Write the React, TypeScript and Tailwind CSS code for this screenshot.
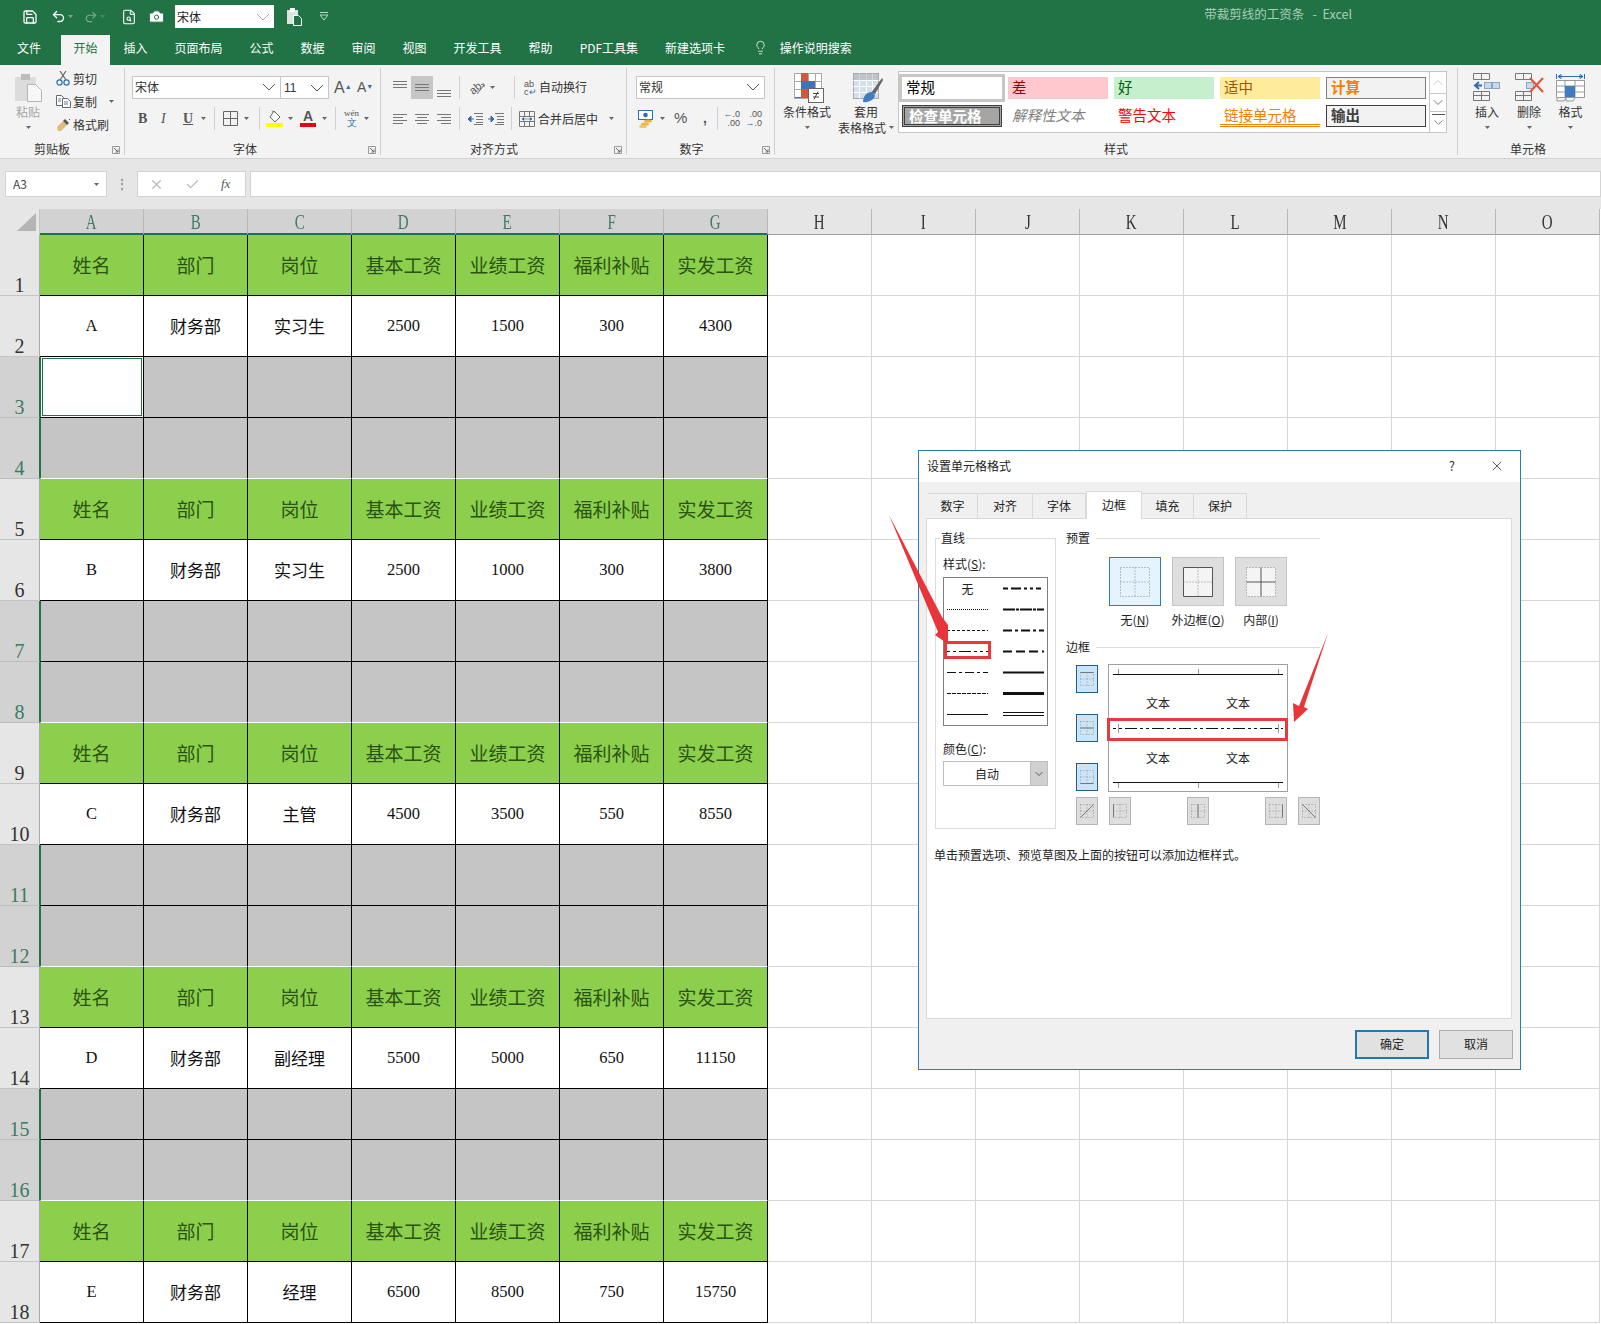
import React from 'react';
import { Save, Undo2, Redo2, FileSearch, Camera, Lightbulb, X, Check, ChevronDown, ChevronUp } from 'lucide-react';

const Caret = ({ className = '' }: { className?: string }) => (
  <svg width="5" height="3" viewBox="0 0 5 3" className={`shrink-0 ${className}`}><path d="M0 0h5L2.5 3z" fill="#666" /></svg>
);

const Sep = ({ className = '' }: { className?: string }) => <div className={`w-px h-[23px] bg-[#d0d0d0] shrink-0 ${className}`} />;

const Chev = ({ w = 14, className = '' }: { w?: number; className?: string }) => (
  <svg width={w} height="8" viewBox="0 0 14 8" className={`shrink-0 ${className}`}><path d="M1 1l6 6 6-6" fill="none" stroke="#555" /></svg>
);

const Launcher = () => (
  <svg width="8" height="8" viewBox="0 0 8 8" className="absolute right-[4px] bottom-[1px]"><path d="M.5 7.5v-7h7v7z" fill="none" stroke="#999" /><path d="M2 2l4 4M6 3.5V6H3.5" fill="none" stroke="#666" /></svg>
);

const Group = ({ w, label, launcher, labelPad = '', children }: { w: string; label: string; launcher?: boolean; labelPad?: string; children: React.ReactNode }) => (
  <div className={`${w} mt-[3px] h-[87px] border-r border-[#cfcfcf] relative shrink-0`}>
    <div className="h-[73px] pt-[8px]">{children}</div>
    <div className={`h-[16px] leading-[16px] text-center text-[12px] text-[#333] ${labelPad}`}>{label}</div>
    {launcher && <Launcher />}
  </div>
);

const Lines = ({ ys, x1, x2, w = 14 }: { ys: number[]; x1: number[]; x2: number[]; w?: number }) => (
  <svg width={w} height="12" viewBox={`0 0 ${w} 12`} className="shrink-0">
    {ys.map((y, i) => <path key={i} d={`M${x1[i]} ${y + 0.5}H${x2[i]}`} stroke="#777" />)}
  </svg>
);

const PasteIcon = () => (
  <svg width="29" height="29" viewBox="0 0 29 29">
    <rect x="1" y="4" width="21" height="24" fill="#dcdcdc" />
    <rect x="7" y="1" width="9" height="6" fill="#bdbdbd" />
    <path d="M13.5 11.5h8l6 6v11h-14z" fill="#f7f7f7" stroke="#b5b5b5" />
  </svg>
);
const CutIcon = () => (
  <svg width="14" height="15" viewBox="0 0 14 15">
    <path d="M4 9L10 0M10 9L4 0" stroke="#666" strokeWidth="1.2" />
    <circle cx="3.5" cy="11.5" r="2.6" fill="none" stroke="#2f6fb0" strokeWidth="1.2" />
    <circle cx="10.5" cy="11.5" r="2.6" fill="none" stroke="#2f6fb0" strokeWidth="1.2" />
  </svg>
);
const CopyIcon = () => (
  <svg width="15" height="13" viewBox="0 0 15 13">
    <path d="M.5.5h5l2 2v8h-7z" fill="#fff" stroke="#666" />
    <path d="M6.5 3.5h5l3 3v6h-8z" fill="#fff" stroke="#666" />
    <path d="M8 7h4M8 9h4M2 4h3M2 6h3" stroke="#5b7fa6" />
  </svg>
);
const BrushIcon = () => (
  <svg width="15" height="14" viewBox="0 0 15 14">
    <path d="M1 9l6-6 4 4-6 6H2z" fill="#e0bc7a" />
    <path d="M7 3l2-2 4 4-2 2z" fill="#555" />
    <path d="M13 1l1 1" stroke="#555" />
  </svg>
);
const BorderIcon = () => (
  <svg width="15" height="15" viewBox="0 0 15 15"><path d="M.5.5h14v14H.5zM7.5.5v14M.5 7.5h14" fill="none" stroke="#666" /></svg>
);
const FillIcon = () => (
  <svg width="17" height="17" viewBox="0 0 17 17">
    <path d="M8 1l6 6-5 5-5-5z" fill="#fff" stroke="#666" />
    <path d="M6 .5l2 2" stroke="#666" />
    <rect x="0" y="13" width="17" height="4" fill="#ffff00" />
  </svg>
);
const FontColor = () => (
  <div className="w-[16px] flex flex-col items-center shrink-0">
    <span className="text-[14px] leading-[13px] font-bold text-[#555] font-['Liberation_Sans',sans-serif]">A</span>
    <div className="w-[16px] h-[4px] bg-[#e60012]" />
  </div>
);
const PhoneticIcon = () => (
  <div className="w-[15px] flex flex-col items-center leading-none shrink-0">
    <span className="text-[9px] leading-[9px] text-[#555]">wén</span>
    <span className="text-[10px] leading-[10px] text-[#2f6fb0]">文</span>
  </div>
);
const OrientIcon = () => (
  <svg width="18" height="18" viewBox="0 0 18 18" className="overflow-visible">
    <text x="1" y="13" fontSize="11" fill="#555" transform="rotate(-40 7 9)" fontFamily="Liberation Sans">ab</text>
    <path d="M9 15l7-9M13 5.5l3-.5 0 3" fill="none" stroke="#666" />
  </svg>
);
const IndentIcon = ({ flip }: { flip?: boolean }) => (
  <svg width="16" height="12" viewBox="0 0 16 12">
    <path d="M7 .5h9M9 3.5h7M9 6.5h7M9 9.5h7M7 11.5h9" stroke="#777" />
    {flip ? <path d="M0 6h4M3 3l3 3-3 3z" stroke="#2f6fb0" fill="#2f6fb0" /> : <path d="M2 6h5M4 3L1 6l3 3z" stroke="#2f6fb0" fill="#2f6fb0" />}
  </svg>
);
const MergeIcon = () => (
  <svg width="16" height="16" viewBox="0 0 16 16">
    <path d="M.5.5h15v15H.5zM.5 5.5h15M.5 10.5h15M5.5.5v5M10.5.5v5M5.5 10.5v5M10.5 10.5v5" fill="none" stroke="#777" />
    <path d="M3 8h10M3 8l2-1.5v3zM13 8l-2-1.5v3z" stroke="#2f6fb0" fill="#2f6fb0" strokeWidth=".6" />
  </svg>
);
const CurrencyIcon = () => (
  <svg width="16" height="18" viewBox="0 0 16 18">
    <rect x=".5" y=".5" width="14" height="9" fill="#fff" stroke="#2f6fb0" />
    <circle cx="7.5" cy="5" r="2.3" fill="#2f6fb0" />
    <ellipse cx="10" cy="11" rx="4" ry="1.6" fill="#e8b23f" />
    <ellipse cx="7" cy="14" rx="4" ry="1.6" fill="#e8b23f" />
    <ellipse cx="5" cy="16.4" rx="4" ry="1.6" fill="#efc766" />
  </svg>
);
const CondIcon = () => (
  <svg width="30" height="30" viewBox="0 0 30 30">
    <path d="M.5.5h27v25H.5zM.5 8.5h27M.5 16.5h27M7.5.5v25M14.5.5v25M21.5.5v25" fill="#fff" stroke="#aaa" />
    <rect x="7" y="0" width="7" height="8" fill="#d0573a" />
    <rect x="7" y="8" width="14" height="8" fill="#3f73b5" />
    <rect x="7" y="16" width="7" height="9" fill="#d0573a" />
    <rect x="1" y="24" width="6" height="1" fill="#3f73b5" />
    <rect x="14.5" y="15.5" width="15" height="14" fill="#fff" stroke="#666" />
    <path d="M19 20.5h6M19 24h6M24 18.5l-4 8" stroke="#444" fill="none" />
  </svg>
);
const TableIcon = () => (
  <svg width="30" height="30" viewBox="0 0 30 30">
    <rect x=".5" y=".5" width="25" height="25" fill="#d5deeb" stroke="#aaa" />
    <path d="M.5 7.5h25M.5 13.5h25M.5 19.5h25M6.5.5v25M13.5.5v25M19.5.5v25" stroke="#fff" />
    <rect x="0" y="0" width="26" height="7" fill="#a9a9a9" opacity=".5" />
    <path d="M18 20L29 5l1 2-8 14z" fill="#666" />
    <path d="M10 29c0-6 4-10 8-10l4 3c0 4-6 8-12 7z" fill="#3f7cc0" />
  </svg>
);
const InsertIcon = ({ del }: { del?: boolean }) => (
  <svg width="29" height="28" viewBox="0 0 29 28">
    <path d="M.5.5h8v6h-8zM8.5.5h8v6h-8zM.5 18.5h8v9h-8zM8.5 18.5h8v9h-8zM.5 22.5h16" fill="none" stroke="#777" />
    <rect x="11.5" y="9.5" width="7" height="6" fill="#cad8ea" stroke="#8aa5c4" />
    {!del && <rect x="19.5" y="9.5" width="7" height="6" fill="#cad8ea" stroke="#8aa5c4" />}
    {del ? <path d="M15 5l13 14M28 5L15 19" stroke="#e0573a" strokeWidth="2.2" /> : <path d="M2 12.5h7M6 9l-4 3.5L6 16" fill="none" stroke="#2f6fb0" strokeWidth="2" />}
  </svg>
);
const FormatIcon = () => (
  <svg width="29" height="30" viewBox="0 0 29 30">
    <path d="M.5 1v5M28.5 1v5M2 3.5h25M2 3.5l3-2v4zM27 3.5l-3-2v4z" stroke="#2f6fb0" fill="none" />
    <path d="M.5 7.5h28v17H.5zM.5 13h28M.5 19h28M9 7.5v17M19 7.5v17" fill="#fff" stroke="#999" />
    <rect x="9" y="13" width="10" height="11" fill="#3f7cc0" />
    <path d="M1 25v3h7l2-3M10 25v3h7l2-3" fill="none" stroke="#999" />
  </svg>
);

const RibbonCol = ({ icon, lines, caretInline, className = '', iconPad = '' }: { icon: React.ReactNode; lines: string[]; caretInline?: boolean; className?: string; iconPad?: string }) => (
  <div className={`flex flex-col items-center pt-[5px] text-[12px] text-[#333] shrink-0 ${className}`}>
    <div className={`h-[31px] flex items-start ${iconPad}`}>{icon}</div>
    {lines.length === 1 ? (
      <>
        <div className="h-[16px] leading-[16px]">{lines[0]}</div>
        <Caret className="mt-[6px]" />
      </>
    ) : (
      <>
        <div className="h-[16px] leading-[16px]">{lines[0]}</div>
        <div className="h-[15px] leading-[15px] whitespace-nowrap flex items-center">{lines[1]}{caretInline && <Caret className="ml-[3px]" />}</div>
      </>
    )}
  </div>
);

const StyleCell = ({ className, children }: { className: string; children: React.ReactNode }) => (
  <div className={`h-[22px] flex items-center pl-[4px] text-[14.5px] leading-[18px] whitespace-nowrap ${className}`}>{children}</div>
);

const Ribbon = () => (
  <div className="h-[94px] bg-[#f3f3f3] border-b border-[#d2d2d2] flex shrink-0">
    <Group w="w-[125px]" label="剪贴板" launcher labelPad="pr-[20px]">
      <div className="flex -mt-[8px]">
        <div className="w-[56px] flex flex-col items-center pt-[5px]">
          <PasteIcon />
          <div className="text-[12px] leading-[16px] text-[#a5a5a5] mt-[2px]">粘贴</div>
          <Caret className="mt-[6px]" />
        </div>
        <div className="text-[12px] text-[#333] -mt-[1px]">
          <div className="h-[23px] flex items-center gap-[2px]"><CutIcon /><span className="ml-px">剪切</span></div>
          <div className="h-[23px] flex items-center gap-[2px]"><CopyIcon /><span>复制</span><Caret className="ml-[10px]" /></div>
          <div className="h-[23px] flex items-center gap-[2px]"><BrushIcon /><span>格式刷</span></div>
        </div>
      </div>
    </Group>
    <Group w="w-[256px]" label="字体" launcher labelPad="pr-[15px]">
      <div className="flex items-center pl-[7px] h-[23px]">
        <div className="w-[149px] h-[23px] bg-white border border-[#c6c6c6] flex items-center justify-between pl-[2px] pr-[4px] pb-[1px] text-[12px] text-[#333]">宋体<Chev /></div>
        <div className="w-[48px] h-[23px] bg-white border border-[#c6c6c6] border-l-0 flex items-center justify-between pl-[3px] pr-[4px] text-[12px] text-[#333] font-['Liberation_Sans',sans-serif]">11<Chev /></div>
        <span className="ml-[5px] w-[14px] text-[16px] text-[#555] font-['Liberation_Sans',sans-serif]">A<sup className="text-[#2f6fb0] text-[7px]">▲</sup></span>
        <span className="ml-[9px] w-[14px] text-[14px] text-[#555] font-['Liberation_Sans',sans-serif]">A<sup className="text-[#2f6fb0] text-[7px]">▼</sup></span>
      </div>
      <div className="flex items-center pl-[13px] mt-[8px] h-[23px] text-[#555] font-['Liberation_Serif',serif]">
        <span className="w-[8px] text-[14px] font-bold">B</span>
        <span className="ml-[15px] w-[7px] text-[14px] italic">I</span>
        <span className="ml-[15px] w-[9px] text-[14px] underline font-bold">U</span>
        <Caret className="ml-[9px]" />
        <Sep className="ml-[8px]" />
        <div className="ml-[8px]"><BorderIcon /></div>
        <Caret className="ml-[6px]" />
        <Sep className="ml-[10px]" />
        <div className="ml-[6px]"><FillIcon /></div>
        <Caret className="ml-[5px]" />
        <div className="ml-[7px]"><FontColor /></div>
        <Caret className="ml-[6px]" />
        <Sep className="ml-[8px]" />
        <div className="ml-[8px]"><PhoneticIcon /></div>
        <Caret className="ml-[5px]" />
      </div>
    </Group>
    <Group w="w-[246px]" label="对齐方式" launcher labelPad="pr-[19px]">
      <div className="flex items-center pl-[12px] h-[23px]">
        <div className="-mt-[8px]"><Lines ys={[3, 6, 9]} x1={[0, 0, 0]} x2={[14, 14, 14]} /></div>
        <div className="ml-[4px] w-[22px] h-[23px] bg-[#c6c6c6] flex items-center justify-center"><Lines ys={[2, 5, 8]} x1={[0, 0, 0]} x2={[14, 14, 14]} /></div>
        <div className="ml-[4px] mt-[10px]"><Lines ys={[3, 6, 9]} x1={[0, 0, 0]} x2={[14, 14, 14]} /></div>
        <Sep className="ml-[8px]" />
        <div className="ml-[8px]"><OrientIcon /></div>
        <Caret className="ml-[4px]" />
        <Sep className="ml-[19px]" />
        <div className="ml-[9px] w-[13px] text-[9px] leading-[8px] text-[#555] font-['Liberation_Sans',sans-serif]">ab<br />c<span className="text-[#2f6fb0]">↵</span></div>
        <span className="ml-[2px] pb-[1px] text-[12px] text-[#333]">自动换行</span>
      </div>
      <div className="flex items-center pl-[12px] mt-[8px] h-[23px]">
        <Lines ys={[1, 4, 7, 10]} x1={[0, 0, 0, 0]} x2={[14, 10, 14, 10]} />
        <div className="ml-[8px]"><Lines ys={[1, 4, 7, 10]} x1={[0, 2, 0, 2]} x2={[14, 12, 14, 12]} /></div>
        <div className="ml-[8px]"><Lines ys={[1, 4, 7, 10]} x1={[0, 4, 0, 4]} x2={[14, 14, 14, 14]} /></div>
        <Sep className="ml-[8px]" />
        <div className="ml-[7px]"><IndentIcon /></div>
        <div className="ml-[5px]"><IndentIcon flip /></div>
        <Sep className="ml-[7px]" />
        <div className="ml-[7px]"><MergeIcon /></div>
        <span className="ml-[3px] text-[12px] text-[#333]">合并后居中</span>
        <Caret className="ml-[11px]" />
      </div>
    </Group>
    <Group w="w-[148px]" label="数字" launcher labelPad="pr-[18px]">
      <div className="flex items-center pl-[9px] h-[23px]">
        <div className="w-[129px] h-[23px] bg-white border border-[#c6c6c6] flex items-center justify-between pl-[2px] pr-[4px] pb-[1px] text-[12px] text-[#333]">常规<Chev /></div>
      </div>
      <div className="flex items-center pl-[11px] mt-[8px] h-[23px] text-[#555] font-['Liberation_Sans',sans-serif]">
        <CurrencyIcon />
        <Caret className="ml-[6px]" />
        <span className="ml-[9px] w-[13px] text-[15px]">%</span>
        <span className="ml-[16px] w-[5px] text-[14px] font-bold">,</span>
        <Sep className="ml-[9px]" />
        <div className="ml-[5px] w-[17px] text-[9px] leading-[9px] text-right"><span className="text-[#2f6fb0]">←</span>.0<br />.00</div>
        <div className="ml-[5px] w-[17px] text-[9px] leading-[9px] text-right">.00<br /><span className="text-[#2f6fb0]">→</span>.0</div>
      </div>
    </Group>
    <Group w="w-[683px]" label="样式">
      <div className="flex -mt-[8px]">
        <RibbonCol className="w-[48px] ml-[8px]" iconPad="pl-[3px]" icon={<CondIcon />} lines={['条件格式']} />
        <RibbonCol className="w-[60px] ml-[5px]" iconPad="pl-[3px]" icon={<TableIcon />} lines={['套用', '表格格式']} caretInline />
        <div className="ml-[2px] mt-[3px] w-[549px] h-[62px] bg-white border border-[#c6c6c6] flex">
          <div className="flex-1 pl-[3px] pt-[5px] grid grid-cols-[100px_100px_100px_100px_100px] gap-x-[6px] gap-y-[6px] auto-rows-[22px]">
            <StyleCell className="bg-white text-black outline-3 outline-[#c6c6c6] pb-[3px]">常规</StyleCell>
            <StyleCell className="bg-[#ffc7ce] text-[#9c0006] pb-[3px]">差</StyleCell>
            <StyleCell className="bg-[#c6efce] text-[#006100] pb-[3px]">好</StyleCell>
            <StyleCell className="bg-[#ffeb9c] text-[#9c5700] pb-[3px]">适中</StyleCell>
            <StyleCell className="bg-[#f2f2f2] text-[#fa7d00] font-bold border border-[#7f7f7f] pb-[2px]">计算</StyleCell>
            <StyleCell className="bg-[#a5a5a5] text-white font-bold border-[3px] border-double border-[#3f3f3f]">检查单元格</StyleCell>
            <StyleCell className="italic text-[#7f7f7f] pb-[3px]">解释性文本</StyleCell>
            <StyleCell className="text-[#ff0000] pb-[3px]">警告文本</StyleCell>
            <StyleCell className="text-[#fa7d00] border-b-[3px] border-double border-[#ff8001]">链接单元格</StyleCell>
            <StyleCell className="bg-[#f2f2f2] text-[#3f3f3f] font-bold border border-[#3f3f3f] pb-[2px]">输出</StyleCell>
          </div>
          <div className="w-[17px] border-l border-[#c6c6c6] flex flex-col">
            <div className="h-[21px] flex items-center justify-center"><ChevronUp size={17} color="#c0c0c0" strokeWidth={1.2} /></div>
            <div className="h-[19px] border-y border-[#c6c6c6] flex items-center justify-center"><ChevronDown size={17} color="#555" strokeWidth={1.2} /></div>
            <div className="flex-1 flex flex-col items-center justify-center">
              <div className="w-[13px] h-px bg-[#555]" />
              <ChevronDown size={15} color="#555" strokeWidth={1.2} />
            </div>
          </div>
        </div>
      </div>
    </Group>
    <div className="mt-[3px] h-[87px] flex-1">
      <div className="h-[73px] flex pl-[8px]">
        <RibbonCol className="w-[42px]" icon={<InsertIcon />} lines={['插入']} />
        <RibbonCol className="w-[42px]" icon={<InsertIcon del />} lines={['删除']} />
        <RibbonCol className="w-[41px]" icon={<FormatIcon />} lines={['格式']} />
      </div>
      <div className="h-[16px] leading-[16px] text-[12px] text-[#333] pl-[52px]">单元格</div>
    </div>
  </div>
);

const tabs = ['插入', '页面布局', '公式', '数据', '审阅', '视图', '开发工具', '帮助', 'PDF工具集', '新建选项卡'];

const TitleBar = () => (
  <div className="bg-[#217346] h-[65px] shrink-0 text-white">
    <div className="h-[33px] flex items-center">
      <Save size={16} className="ml-[22px]" strokeWidth={1.9} />
      <Undo2 size={15} className="ml-[13px]" strokeWidth={2.2} />
      <Caret className="ml-[2px] invert" />
      <Redo2 size={14} className="ml-[11px] opacity-40" strokeWidth={2} />
      <Caret className="ml-[2px] invert opacity-40" />
      <FileSearch size={16} className="ml-[16px]" strokeWidth={1.6} />
      <Camera size={17} className="ml-[11px]" fill="#fff" stroke="#217346" strokeWidth={1.4} />
      <div className="ml-[10px] w-[99px] h-[23px] bg-white text-[#222] text-[12px] flex items-center justify-between pl-[2px] pr-[4px]">宋体<Chev className="opacity-50" /></div>
      <svg width="16" height="18" viewBox="0 0 16 18" className="ml-[13px]"><rect x="0" y="2" width="11" height="14" fill="#d9e6df" /><rect x="3" y="0" width="5" height="4" fill="#fff" /><path d="M6.5 7.5h5l3 3v7h-8z" fill="#217346" stroke="#fff" /></svg>
      <svg width="8" height="9" viewBox="0 0 8 9" className="ml-[17px] opacity-70"><path d="M0 .5h8M0 3h8L4 8z" stroke="#fff" fill="none" /></svg>
      <span className="ml-auto mr-[249px] -mt-[4px] text-[12.5px] text-[#a8cfba] whitespace-pre">带裁剪线的工资条   -  Excel</span>
    </div>
    <div className="h-[32px] flex items-center text-[12px] pb-[3px]">
      <div className="w-[58px] text-center">文件</div>
      <div className="ml-[3px] w-[49px] h-[30px] mt-[5px] leading-[25px] bg-[#f3f3f3] text-[#217346] text-center">开始</div>
      {tabs.map(t => <div key={t} className="px-[13.5px] whitespace-nowrap">{t}</div>)}
      <Lightbulb size={15} strokeWidth={1.2} className="ml-[14px]" />
      <span className="ml-[12px]">操作说明搜索</span>
    </div>
  </div>
);

const FormulaBar = () => (
  <div className="h-[50px] bg-[#e6e6e6] shrink-0 flex pt-[12px] text-[12px]">
    <div className="ml-[5px] w-[102px] h-[26px] bg-white border border-[#d4d4d4] flex items-center justify-between pl-[7px] pr-[7px] text-[#444]">A3<Caret /></div>
    <div className="w-[30px] h-[26px] text-center leading-[24px] text-[#999] font-bold">⋮</div>
    <div className="w-[109px] h-[26px] bg-white border border-[#d4d4d4] flex items-center">
      <X size={15} color="#bbb" className="ml-[11px]" />
      <Check size={15} color="#bbb" className="ml-[21px]" />
      <span className="ml-[21px] italic text-[13px] text-[#555] font-['Liberation_Serif',serif]">fx</span>
    </div>
    <div className="ml-[4px] flex-1 h-[26px] bg-white border border-[#d4d4d4]" />
  </div>
);

const people = [
  ['A', '财务部', '实习生', '2500', '1500', '300', '4300'],
  ['B', '财务部', '实习生', '2500', '1000', '300', '3800'],
  ['C', '财务部', '主管', '4500', '3500', '550', '8550'],
  ['D', '财务部', '副经理', '5500', '5000', '650', '11150'],
  ['E', '财务部', '经理', '6500', '8500', '750', '15750'],
];
const heads = ['姓名', '部门', '岗位', '基本工资', '业绩工资', '福利补贴', '实发工资'];
const selCols = ['A', 'B', 'C', 'D', 'E', 'F', 'G'];
const freeCols = ['H', 'I', 'J', 'K', 'L', 'M', 'N', 'O'];

const RowHead = ({ n, selected }: { n: number; selected: boolean }) => (
  <div className={`w-[40px] shrink-0 flex items-end justify-center border-b text-[20px] leading-[20px] font-['Liberation_Serif',serif] ${selected ? 'bg-[#d2d2d2] text-[#3d7a62] border-r border-r-[#217346] border-b-[#bdbdbd]' : 'bg-[#e6e6e6] text-[#333] border-r border-r-[#a8a8a8] border-b-[#c4c4c4]'}`}>{n}</div>
);

const FreeCells = () => (
  <>
    {freeCols.map(c => <div key={c} className="w-[104px] shrink-0 border-r border-b border-[#d6d6d6] bg-white" />)}
  </>
);

const Sheet = () => {
  const rows: React.ReactNode[] = [];
  people.forEach((p, pi) => {
    const base = pi * 4;
    rows.push(
      <div key={`h${pi}`} className="flex h-[61px]">
        <RowHead n={base + 1} selected={false} />
        {heads.map(h => <div key={h} className="w-[104px] shrink-0 bg-[#8ccf4d] border-r border-b border-black flex items-center justify-center text-[19px] text-[#2b5210]">{h}</div>)}
        <FreeCells />
      </div>
    );
    rows.push(
      <div key={`d${pi}`} className="flex h-[61px]">
        <RowHead n={base + 2} selected={false} />
        {p.map((v, i) => (
          <div key={i} className={`w-[104px] shrink-0 bg-white border-r border-b border-black flex items-center justify-center text-[#111] ${i === 1 || i === 2 ? 'text-[17px]' : "pt-[1px] text-[16.5px] font-['Liberation_Serif',serif]"}`}>{v}</div>
        ))}
        <FreeCells />
      </div>
    );
    if (pi === 4) return;
    [3, 4].forEach(k => {
      const n = base + k;
      const bottom = k === 4;
      const short = n === 15;
      rows.push(
        <div key={n} className={`flex ${short ? 'h-[51px]' : 'h-[61px]'}`}>
          <RowHead n={n} selected />
          {selCols.map((c, ci) => {
            const active = n === 3 && ci === 0;
            return (
              <div key={c} className={`w-[104px] shrink-0 border-r border-r-black border-b ${bottom ? 'border-b-white' : 'border-b-black'} ${ci === 0 ? 'border-l border-l-[#217346]' : ''} ${active ? 'bg-white p-[1px]' : 'bg-[#c5c5c5]'}`}>
                {active && <div className="h-full border border-[#217346]" />}
              </div>
            );
          })}
          <FreeCells />
        </div>
      );
    });
  });
  return (
    <div className="flex-1 overflow-hidden bg-white">
      <div className="flex h-[26px]">
        <div className="w-[40px] shrink-0 bg-[#e6e6e6] border-r border-[#c4c4c4] flex items-end justify-end pr-[3px] pb-[4px]">
          <svg width="19" height="18" viewBox="0 0 19 18"><path d="M19 0v18H0z" fill="#b4b4b4" /></svg>
        </div>
        {selCols.map(c => (
          <div key={c} className="w-[104px] shrink-0 bg-[#d2d2d2] border-r border-[#b8b8b8] border-b-2 border-b-[#217346] flex items-center justify-center pt-[1px] text-[20px] text-[#3d7a62] font-['Liberation_Serif',serif]"><span className="inline-block scale-x-75">{c}</span></div>
        ))}
        {freeCols.map(c => (
          <div key={c} className="w-[104px] shrink-0 bg-[#e6e6e6] border-r border-[#b8b8b8] border-b border-b-[#a0a0a0] flex items-center justify-center pt-[1px] text-[20px] text-[#333] font-['Liberation_Serif',serif]"><span className="inline-block scale-x-75">{c}</span></div>
        ))}
      </div>
      {rows}
    </div>
  );
};

const styleLeft = [
  { d: '1 1', sw: 1 },
  { d: '3 2', sw: 1 },
  { d: '3 3 3 3 12 3', sw: 1 },
  { d: '9 3 3 3', sw: 1 },
  { d: '4 1', sw: 1 },
  { d: '', sw: 1 },
];
const styleRight = [
  { d: '5 3 10 3 3 3 3 3', sw: 2 },
  { d: '12 1 3 1', sw: 2 },
  { d: '9 3 3 3', sw: 2 },
  { d: '9 4', sw: 2 },
  { d: '', sw: 2 },
  { d: '', sw: 3 },
];

const Sample = ({ d, sw }: { d: string; sw: number }) => (
  <svg width="41" height="5" viewBox="0 0 41 5" className="block"><path d="M0 2.5h41" stroke="#111" strokeWidth={sw} strokeDasharray={d || undefined} /></svg>
);

const MiniGrid = ({ path }: { path?: string }) => (
  <svg width="14" height="14" viewBox="0 0 14 14">
    <path d="M.5.5h13v13H.5zM7 .5v13M.5 7h13" fill="none" stroke="#999" strokeDasharray="1 2" />
    {path && <path d={path} fill="none" stroke="#777" />}
  </svg>
);

const BlueBtn = ({ path }: { path?: string }) => (
  <div className="w-[22px] h-[28px] bg-[#cce4f7] border border-[#1e5f8f] flex items-center justify-center"><MiniGrid path={path} /></div>
);
const GrayBtn = ({ path, className = '' }: { path?: string; className?: string }) => (
  <div className={`w-[22px] h-[28px] bg-[#dedede] border border-[#b5b5b5] flex items-center justify-center ${className}`}><MiniGrid path={path} /></div>
);

const Preset = ({ label, active, inner, outer }: { label: React.ReactNode; active?: boolean; inner?: boolean; outer?: boolean }) => (
  <div className="w-[52px] flex flex-col items-center">
    <div className={`w-[52px] h-[49px] flex items-center justify-center border ${active ? 'bg-[#e5f3ff] border-[#2f7ab8]' : 'bg-[#dedede] border-[#c4c4c4]'}`}>
      <svg width="30" height="30" viewBox="0 0 30 30">
        <path d="M.5.5h29v29H.5z" fill={active ? 'none' : '#f4f4f4'} stroke={outer ? '#555' : '#888'} strokeDasharray={outer ? undefined : '1 2'} />
        <path d="M15 .5v29M.5 15h29" stroke={inner ? '#555' : '#888'} strokeDasharray={inner ? undefined : '1 2'} />
      </svg>
    </div>
    <div className="mt-[6px] h-[16px] leading-[16px] whitespace-nowrap">{label}</div>
  </div>
);

const Dialog = () => (
  <div className="absolute left-[918px] top-[450px] w-[603px] h-[620px] border border-[#2b7bb9] bg-[#f0f0f0] text-[12px] text-[#222]">
    <div className="h-[31px] bg-white flex items-center pl-[8px] pb-[2px]">
      <span>设置单元格格式</span>
      <span className="ml-auto text-[13px] text-[#333]">?</span>
      <X size={16} strokeWidth={1.2} color="#333" className="ml-[34px] mr-[15px]" />
    </div>
    <div className="flex pl-[9px] pt-[8px] h-[36px] items-end">
      {[['数字', 'w-[50px]'], ['对齐', 'w-[55px]'], ['字体', 'w-[53px]']].map(([t, w]) => (
        <div key={t} className={`${w} h-[25px] leading-[23px] text-center border-t border-r border-[#d9d9d9] bg-[#f0f0f0]`}>{t}</div>
      ))}
      <div className="w-[56px] h-[28px] leading-[26px] text-center bg-white border-t border-x border-[#d9d9d9] relative z-10 -mb-px">边框</div>
      {[['填充', 'w-[52px]'], ['保护', 'w-[53px]']].map(([t, w]) => (
        <div key={t} className={`${w} h-[25px] leading-[23px] text-center border-t border-r border-[#d9d9d9] bg-[#f0f0f0]`}>{t}</div>
      ))}
    </div>
    <div className="ml-[7px] w-[586px] h-[501px] bg-white border border-[#d9d9d9]">
      <div className="flex pl-[8px] pt-[19px]">
        <div className="w-[121px] h-[291px] border border-[#dcdcdc] relative pl-[7px] pt-[17px] shrink-0">
          <span className="absolute -top-[9px] left-[4px] px-px bg-white leading-[16px]">直线</span>
          <div className="leading-[16px]">样式(<u>S</u>):</div>
          <div className="relative mt-[5px] w-[105px] h-[149px] border border-[#808080]">
            <div className="grid grid-cols-[48px_55px] auto-rows-[21px]">
              <div className="pl-[3px] flex items-center"><span className="w-[41px] text-center">无</span></div>
              <div className="pl-[11px] flex items-center"><Sample {...styleRight[0]} /></div>
              {styleLeft.map((s, i) => (
                <React.Fragment key={i}>
                  <div className="pl-[3px] flex items-center"><Sample {...s} /></div>
                  <div className="pl-[11px] flex items-center">
                    {i === 5 ? (
                      <svg width="41" height="5" viewBox="0 0 41 5" className="block"><path d="M0 .5h41M0 3.5h41" stroke="#111" /></svg>
                    ) : <Sample {...styleRight[i + 1]} />}
                  </div>
                </React.Fragment>
              ))}
            </div>
            <div className="absolute left-0 top-[63px] w-[47px] h-[18px] border-[3px] border-[#e83a3c]" />
          </div>
          <div className="mt-[15px] leading-[16px]">颜色(<u>C</u>):</div>
          <div className="mt-[4px] w-[105px] h-[25px] border border-[#bdbdbd] flex">
            <div className="flex-1 text-center leading-[23px]">自动</div>
            <div className="w-[17px] bg-[#d0d0d0] border-l border-[#bdbdbd] flex items-center justify-center"><ChevronDown size={12} color="#555" /></div>
          </div>
        </div>
        <div className="ml-[10px]">
          <div className="-mt-[8px] h-[16px] flex items-center leading-[16px]">预置<div className="ml-[6px] w-[224px] h-px bg-[#dcdcdc]" /></div>
          <div className="ml-[43px] mt-[11px] flex gap-x-[11px]">
            <Preset active label={<>无(<u>N</u>)</>} />
            <Preset outer label={<>外边框(<u>O</u>)</>} />
            <Preset inner label={<>内部(<u>I</u>)</>} />
          </div>
          <div className="mt-[11px] h-[16px] flex items-center leading-[16px]">边框<div className="ml-[6px] w-[224px] h-px bg-[#dcdcdc]" /></div>
          <div className="ml-[10px] mt-[9px] flex">
            <div className="mt-px flex flex-col gap-y-[21px]">
              <BlueBtn path="M.5.5h13" />
              <BlueBtn path="M.5 7h13" />
              <BlueBtn path="M.5 13.5h13" />
            </div>
            <div className="ml-[10px] w-[180px] h-[128px] border border-[#a0a0a0] bg-white relative">
              <svg width="178" height="126" viewBox="0 0 178 126" className="absolute inset-0">
                <path d="M4 9.5h170" stroke="#111" />
                <path d="M9.5 4v5M89.5 4v5M169.5 4v5" stroke="#999" />
                <path d="M4 63.5h170" stroke="#111" strokeDasharray="3 3 3 3 12 3" />
                <path d="M9.5 59v9M169.5 59v9" stroke="#999" />
                <path d="M4 117.5h170" stroke="#111" />
                <path d="M9.5 118v5M89.5 118v5M169.5 118v5" stroke="#999" />
              </svg>
              <div className="pl-[9px] pt-[30px] grid grid-cols-[80px_80px] gap-y-[39px] auto-rows-[16px] leading-[16px] text-center">
                <span>文本</span><span>文本</span><span>文本</span><span>文本</span>
              </div>
              <div className="absolute -left-[2px] top-[53px] w-[181px] h-[23px] border-[3px] border-[#e83a3c]" />
            </div>
          </div>
          <div className="ml-[10px] mt-[5px] flex">
            <GrayBtn path="M.5 13.5L13.5.5" />
            <GrayBtn className="ml-[11px]" path="M.5.5v13" />
            <GrayBtn className="ml-[56px]" path="M7 .5v13" />
            <GrayBtn className="ml-[56px]" path="M13.5.5v13" />
            <GrayBtn className="ml-[11px]" path="M.5.5l13 13" />
          </div>
        </div>
      </div>
      <div className="ml-[7px] mt-[18px] leading-[16px]">单击预置选项、预览草图及上面的按钮可以添加边框样式。</div>
    </div>
    <div className="flex justify-end gap-x-[10px] pt-[11px] pr-[7px]">
      <div className="w-[74px] h-[29px] leading-[24px] text-center bg-[#e1e1e1] border-2 border-[#2277b5]">确定</div>
      <div className="w-[74px] h-[29px] leading-[26px] text-center bg-[#e1e1e1] border border-[#adadad]">取消</div>
    </div>
  </div>
);

export default function App() {
  return (
    <div className="relative w-[1601px] h-[1324px] overflow-hidden flex flex-col bg-white font-['Noto_Sans_CJK_SC','Liberation_Sans',sans-serif]">
      <TitleBar />
      <Ribbon />
      <FormulaBar />
      <Sheet />
      <Dialog />
      <svg width="1601" height="1324" viewBox="0 0 1601 1324" className="absolute left-0 top-0 pointer-events-none">
        <path d="M889 515L942 617L948 625L948 644L935 635L938 632Z" fill="#e8353a" />
        <path d="M1328 633L1304 707L1308 709L1294 722L1293 703L1299 706Z" fill="#e8353a" />
      </svg>
    </div>
  );
}
